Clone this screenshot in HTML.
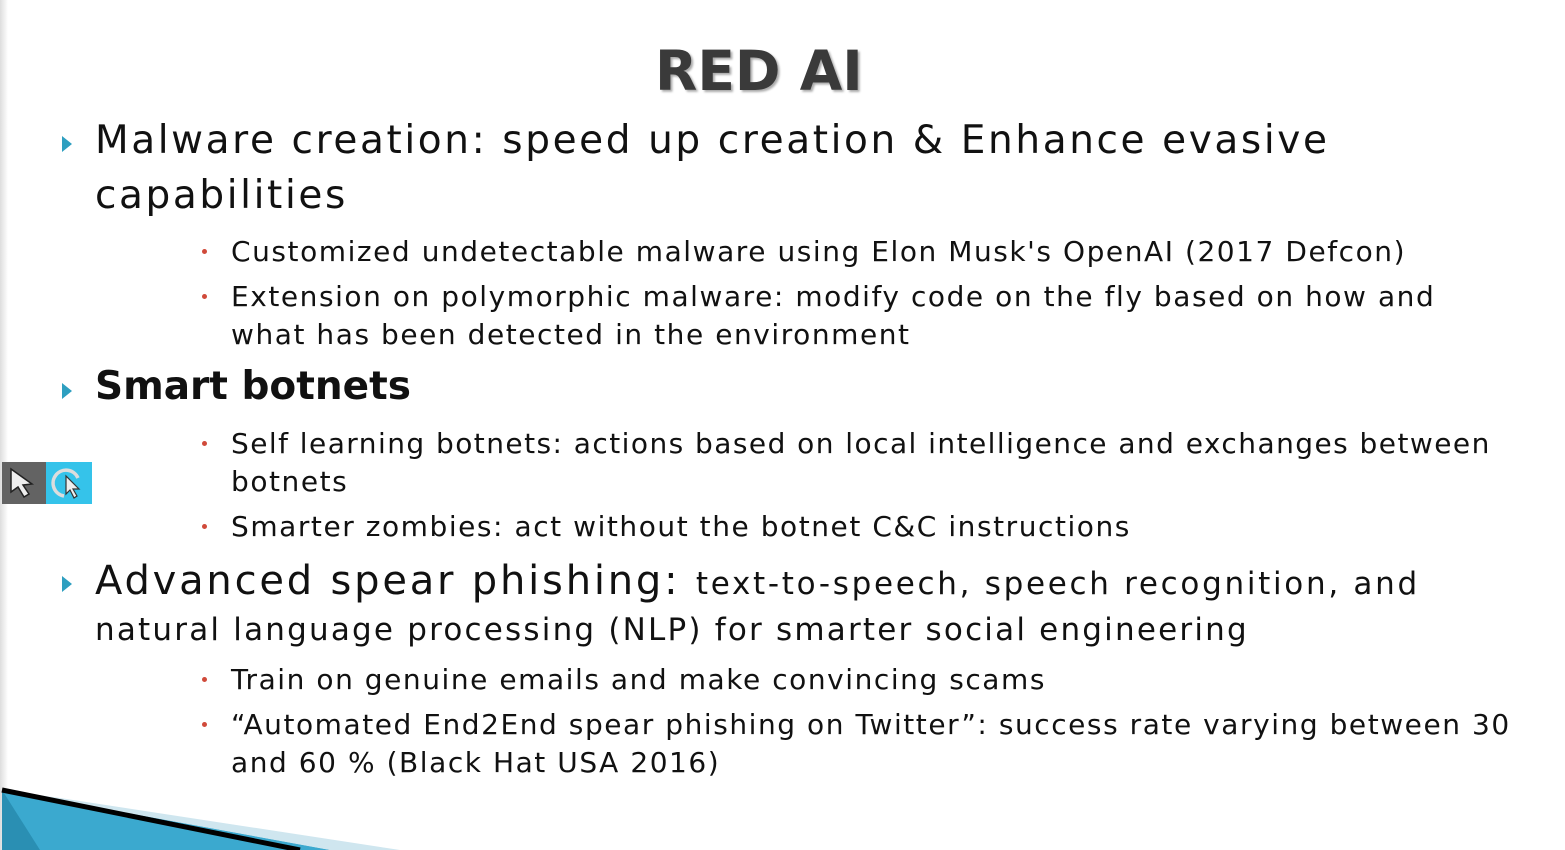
<!DOCTYPE html>
<html><head><meta charset="utf-8"><style>
html,body{margin:0;padding:0;width:1565px;height:850px;overflow:hidden;background:#fff;font-family:"DejaVu Sans","Liberation Sans",sans-serif;color:#111}
.t{position:absolute;white-space:nowrap;line-height:1}
.l1{font-size:39px;letter-spacing:2.6px}
.l2{font-size:28px;letter-spacing:1.55px}
.tri{position:absolute;width:0;height:0;border-left:10px solid #2e9fc0;border-top:8px solid transparent;border-bottom:8px solid transparent}
.dot{position:absolute;width:5px;height:5px;border-radius:50%;background:#d04a3a}
</style></head><body>
<div style="position:absolute;left:0;top:0;width:8px;height:850px;background:linear-gradient(90deg,#ddd,#fff)"></div>
<div class="t" style="left:655px;top:44px;font-size:55px;font-weight:bold;color:#3a3a3a;text-shadow:2px 2px 2px #aaa">RED AI</div>

<div class="tri" style="left:62px;top:136px"></div>
<div class="t l1" style="left:95px;top:121px">Malware creation: speed up creation &amp; Enhance evasive</div>
<div class="t l1" style="left:95px;top:176px">capabilities</div>
<div class="dot" style="left:202px;top:249px"></div>
<div class="t l2" style="left:231px;top:238px">Customized undetectable malware using Elon Musk's OpenAI (2017 Defcon)</div>
<div class="dot" style="left:202px;top:294px"></div>
<div class="t l2" style="left:231px;top:283px">Extension on polymorphic malware: modify code on the fly based on how and</div>
<div class="t l2" style="left:231px;top:321px">what has been detected in the environment</div>

<div class="tri" style="left:62px;top:383px"></div>
<div class="t" style="left:95px;top:367px;font-weight:bold;font-size:39px">Smart botnets</div>
<div class="dot" style="left:202px;top:441px"></div>
<div class="t l2" style="left:231px;top:430px;letter-spacing:1.45px">Self learning botnets: actions based on local intelligence and exchanges between</div>
<div class="t l2" style="left:231px;top:468px">botnets</div>
<div class="dot" style="left:202px;top:524px"></div>
<div class="t l2" style="left:231px;top:513px">Smarter zombies: act without the botnet C&amp;C instructions</div>

<div class="tri" style="left:62px;top:576px"></div>
<div class="t" style="left:95px;top:561px;font-size:40px;letter-spacing:2.8px">Advanced spear phishing: <span style="font-size:31px;letter-spacing:2.7px">text-to-speech, speech recognition, and</span></div>
<div class="t" style="left:95px;top:615px;font-size:31px;letter-spacing:2.2px">natural language processing (NLP) for smarter social engineering</div>
<div class="dot" style="left:202px;top:677px"></div>
<div class="t l2" style="left:231px;top:666px">Train on genuine emails and make convincing scams</div>
<div class="dot" style="left:202px;top:722px"></div>
<div class="t l2" style="left:231px;top:711px">“Automated End2End spear phishing on Twitter”: success rate varying between 30</div>
<div class="t l2" style="left:231px;top:749px">and 60 % (Black Hat USA 2016)</div>

<div style="position:absolute;left:2px;top:462px;width:44px;height:42px;background:#636363"></div>
<div style="position:absolute;left:46px;top:462px;width:46px;height:42px;background:#35c3ea"></div>
<svg style="position:absolute;left:2px;top:462px" width="92" height="42">
<path d="M9 7 L9 30 L16 25 L22 35 L27 32 L21 23 L30 22 Z" fill="#eee" stroke="#222" stroke-width="1.5"/>
<path d="M76 16 A13 13 0 1 0 62 34" fill="none" stroke="#ddd" stroke-width="3.5"/>
<path d="M64 14 L64 32 L68 28 L72 36 L75 34 L71 27 L77 27 Z" fill="#eee" stroke="#333" stroke-width="1.2"/>
</svg>

<svg style="position:absolute;left:0;top:780px" width="1565" height="70">
<polygon points="2,10 2,70 330,70" fill="#2a8fb3"/>
<polygon points="2,10 40,70 330,70" fill="#3ba9cf"/>
<polygon points="2,10 330,70 400,70 60,18" fill="#cfe6ef"/>
<path d="M2 10 L300 70" stroke="#000" stroke-width="5"/>
</svg>
</body></html>
